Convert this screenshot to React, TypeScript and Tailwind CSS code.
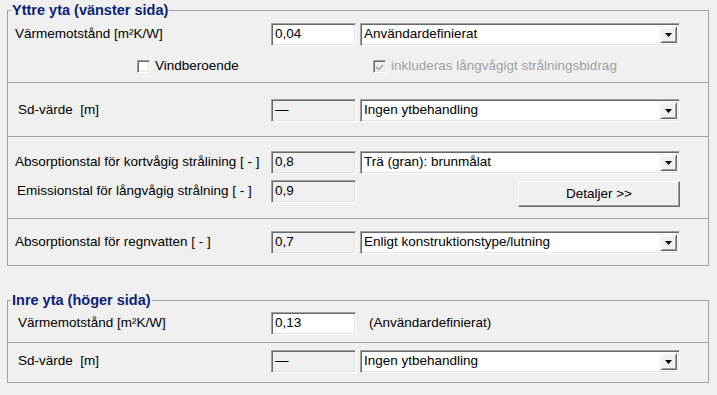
import type { ReactNode } from "react";

// --- Small win32-style controls ---
const sunken =
  "border border-t-[#a0a0a0] border-l-[#a0a0a0] border-r-white border-b-white shadow-[inset_1px_1px_0_#696969,inset_-1px_-1px_0_#e3e3e3]";

function Field({ value, disabled }: { value: string; disabled?: boolean }) {
  return (
    <div
      className={`w-[85px] h-[23px] shrink-0 flex items-center pl-[3px] ${sunken} ${
        disabled ? "bg-[#f0f0f0]" : "bg-white"
      }`}
    >
      {value}
    </div>
  );
}

function Combo({ value }: { value: string }) {
  return (
    <div className={`ml-[4px] w-[320px] h-[23px] shrink-0 flex items-center bg-white p-[2px] ${sunken}`}>
      <span className="flex-1 pl-[1px] truncate">{value}</span>
      <div className="w-[17px] h-full flex items-center justify-center bg-[#f0f0f0] border border-t-[#f0f0f0] border-l-[#f0f0f0] border-r-[#696969] border-b-[#696969] shadow-[inset_1px_1px_0_#fff,inset_-1px_-1px_0_#a0a0a0]">
        <svg width="7" height="4" viewBox="0 0 7 4">
          <polygon points="0,0 7,0 3.5,4" fill="#000" />
        </svg>
      </div>
    </div>
  );
}

function Check({ checked, disabled }: { checked?: boolean; disabled?: boolean }) {
  return (
    <div
      className={`w-[13px] h-[13px] shrink-0 flex items-center justify-center ${sunken} ${
        disabled ? "bg-[#f0f0f0]" : "bg-white"
      }`}
    >
      {checked && (
        <svg width="7" height="7" viewBox="0 0 7 7">
          <path d="M0 3 L2.5 5.5 L7 1 L7 3 L2.5 7.5 L0 5 Z" fill={disabled ? "#a0a0a0" : "#000"} />
        </svg>
      )}
    </div>
  );
}

function Row({ label, indent = "pl-[7px]", children }: { label: string; indent?: string; children: ReactNode }) {
  return (
    <div className="flex items-center h-[23px]">
      <div className={`w-[263px] shrink-0 whitespace-pre ${indent}`}>{label}</div>
      {children}
    </div>
  );
}

function Group({ title, children }: { title: string; children: ReactNode }) {
  return (
    <fieldset className="ml-[7px] w-[702px] border border-[#a0a0a0]">
      <legend className="ml-[3px] px-[1px] leading-[16px] text-[14.5px] font-bold text-[#0a1f7a]">{title}</legend>
      {children}
    </fieldset>
  );
}

export default function App() {
  return (
    <div className="w-[717px] h-[395px] bg-[#f0f0f0] pt-[2px] text-[13.5px] text-black font-['Liberation_Sans',Arial,sans-serif] overflow-hidden">
      {/* Outer surface */}
      <Group title="Yttre yta (vänster sida)">
        <div className="h-[64px] pt-[5px]">
          <Row label="Värmemotstånd [m²K/W]">
            <Field value="0,04" />
            <Combo value="Användardefinierat" />
          </Row>
          <div className="flex items-center h-[16px] mt-[12px]">
            <div className="ml-[129px] w-[236px] flex items-center gap-[5px]">
              <Check />
              <span>Vindberoende</span>
            </div>
            <div className="flex items-center gap-[5px] text-[#a0a0a0]">
              <Check checked disabled />
              <span>inkluderas långvågigt strålningsbidrag</span>
            </div>
          </div>
        </div>

        <div className="h-[54px] border-t border-[#a0a0a0] pt-[16px]">
          <Row label="Sd-värde  [m]" indent="pl-[10px]">
            <Field value="—" disabled />
            <Combo value="Ingen ytbehandling" />
          </Row>
        </div>

        <div className="h-[82px] border-t border-[#a0a0a0] pt-[14px]">
          <Row label="Absorptionstal för kortvågig strålining [ - ]">
            <Field value="0,8" disabled />
            <Combo value="Trä (gran): brunmålat" />
          </Row>
          <div className="flex items-start mt-[6px]">
            <div className="flex items-center h-[23px]">
              <div className="w-[263px] shrink-0 pl-[9px]">Emissionstal för långvågig strålning [ - ]</div>
              <Field value="0,9" disabled />
            </div>
            <button className="ml-[162px] mt-[1px] w-[162px] h-[26px] bg-[#f0f0f0] border border-t-white border-l-white border-r-[#696969] border-b-[#696969] shadow-[inset_-1px_-1px_0_#a0a0a0]">
              Detaljer &gt;&gt;
            </button>
          </div>
        </div>

        <div className="h-[47px] border-t border-[#a0a0a0] pt-[12px]">
          <Row label="Absorptionstal för regnvatten [ - ]">
            <Field value="0,7" disabled />
            <Combo value="Enligt konstruktionstype/lutning" />
          </Row>
        </div>
      </Group>

      <div className="h-[26px]" />

      {/* Inner surface */}
      <Group title="Inre yta (höger sida)">
        <div className="h-[34px] pt-[4px]">
          <Row label="Värmemotstånd [m²K/W]" indent="pl-[10px]">
            <Field value="0,13" />
            <span className="ml-[13px]">(Användardefinierat)</span>
          </Row>
        </div>
        <div className="h-[40px] border-t border-[#a0a0a0] pt-[7px]">
          <Row label="Sd-värde  [m]" indent="pl-[10px]">
            <Field value="—" disabled />
            <Combo value="Ingen ytbehandling" />
          </Row>
        </div>
      </Group>
    </div>
  );
}
